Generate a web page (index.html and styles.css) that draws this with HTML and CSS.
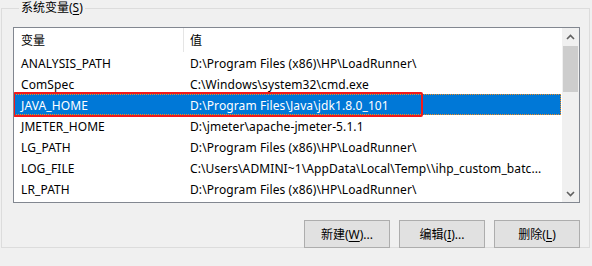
FILE: index.html
```html
<!DOCTYPE html>
<html lang="zh-CN">
<head>
    <meta charset="UTF-8">
    <title>系统变量</title>
    <link rel="stylesheet" href="styles.css">
</head>
<body>
    <fieldset class="group">
        <legend>系统变量(<u>S</u>)</legend>
        <div class="list">
            <div class="rows">
                <div class="row head">
                    <div class="col name">变量</div>
                    <div class="col value">值</div>
                </div>
                <div class="row">
                    <div class="col name">ANALYSIS_PATH</div>
                    <div class="col value">D:\Program Files (x86)\HP\LoadRunner\</div>
                </div>
                <div class="row">
                    <div class="col name">ComSpec</div>
                    <div class="col value">C:\Windows\system32\cmd.exe</div>
                </div>
                <div class="row selected">
                    <div class="col name">JAVA_HOME</div>
                    <div class="col value">D:\Program Files\Java\jdk1.8.0_101</div>
                    <div class="mark"></div>
                </div>
                <div class="row">
                    <div class="col name">JMETER_HOME</div>
                    <div class="col value">D:\jmeter\apache-jmeter-5.1.1</div>
                </div>
                <div class="row">
                    <div class="col name">LG_PATH</div>
                    <div class="col value">D:\Program Files (x86)\HP\LoadRunner\</div>
                </div>
                <div class="row">
                    <div class="col name">LOG_FILE</div>
                    <div class="col value">C:\Users\ADMINI~1\AppData\Local\Temp\\ihp_custom_batc...</div>
                </div>
                <div class="row">
                    <div class="col name">LR_PATH</div>
                    <div class="col value">D:\Program Files (x86)\HP\LoadRunner\</div>
                </div>
            </div>
            <div class="scrollbar">
                <div class="arrow">
                    <svg width="9" height="6" viewBox="0 0 9 6"><path d="M1 5 L4.5 1.5 L8 5" fill="none" stroke="#606060" stroke-width="1.6"/></svg>
                </div>
                <div class="thumb"></div>
                <div class="track"></div>
                <div class="arrow">
                    <svg width="9" height="6" viewBox="0 0 9 6"><path d="M1 1 L4.5 4.5 L8 1" fill="none" stroke="#606060" stroke-width="1.6"/></svg>
                </div>
            </div>
        </div>
        <div class="buttons">
            <button type="button">新建(<u>W</u>)...</button>
            <button type="button">编辑(<u>I</u>)...</button>
            <button type="button">删除(<u>L</u>)</button>
        </div>
    </fieldset>
</body>
</html>
```

FILE: styles.css
```css
body {
    font-family: "Noto Sans", "Noto Sans CJK SC", sans-serif;
    font-size: 12px;
    color: #000;
    background-color: #f0f0f0;
    margin: 0;
    padding: 0;
}
.group {
    margin: 0 2px 1px 1px;
    padding: 0 9px 0 11px;
    height: 248px;
    border: 1px solid #dcdcdc;
    box-sizing: border-box;
}
.group legend {
    margin-left: 6px;
    padding: 0 2px;
    line-height: 16px;
    height: 16px;
}
u {
    text-decoration-thickness: 1px;
    text-underline-offset: 2px;
}
.list {
    display: flex;
    margin-top: 11px;
    height: 176px;
    border: 1px solid #828790;
    background: #fff;
    box-sizing: border-box;
}
.rows {
    flex: 1;
    overflow: hidden;
}
.row {
    display: flex;
    height: 21px;
    position: relative;
}
.row.head {
    height: 24px;
}
.col {
    white-space: nowrap;
    overflow: hidden;
    padding-top: 1px;
    line-height: 21px;
    letter-spacing: 0.1px;
}
.row.head .col {
    line-height: 23px;
}
.col.name {
    width: 162px;
    padding-left: 7px;
    flex: none;
}
.col.value {
    flex: 1;
    padding-left: 6px;
    border-left: 1px solid transparent;
}
.row.head .col.value {
    border-left-color: #e5e5e5;
}
.row.selected {
    background: #0078d7;
    color: #fff;
    outline: 1px dotted #f08c20;
    outline-offset: -1px;
}
.mark {
    position: absolute;
    left: -1px;
    top: -2px;
    width: 406px;
    height: 21px;
    border: 2px solid #f21a1a;
    border-radius: 2px;
}
.scrollbar {
    width: 17px;
    display: flex;
    flex-direction: column;
    background: #f0f0f0;
    margin-left: 1px;
}
.arrow {
    height: 17px;
    display: flex;
    align-items: center;
    justify-content: center;
}
.thumb {
    height: 46px;
    margin: 1px 1px 0 1px;
    background: #cdcdcd;
}
.track {
    flex: 1;
}
.buttons {
    display: flex;
    justify-content: flex-end;
    gap: 9px;
    margin-top: 17px;
}
.buttons button {
    width: 86px;
    height: 28px;
    font-family: inherit;
    font-size: 12px;
    color: #000;
    background-color: #e1e1e1;
    border: 1px solid #adadad;
    padding: 0;
}
```
